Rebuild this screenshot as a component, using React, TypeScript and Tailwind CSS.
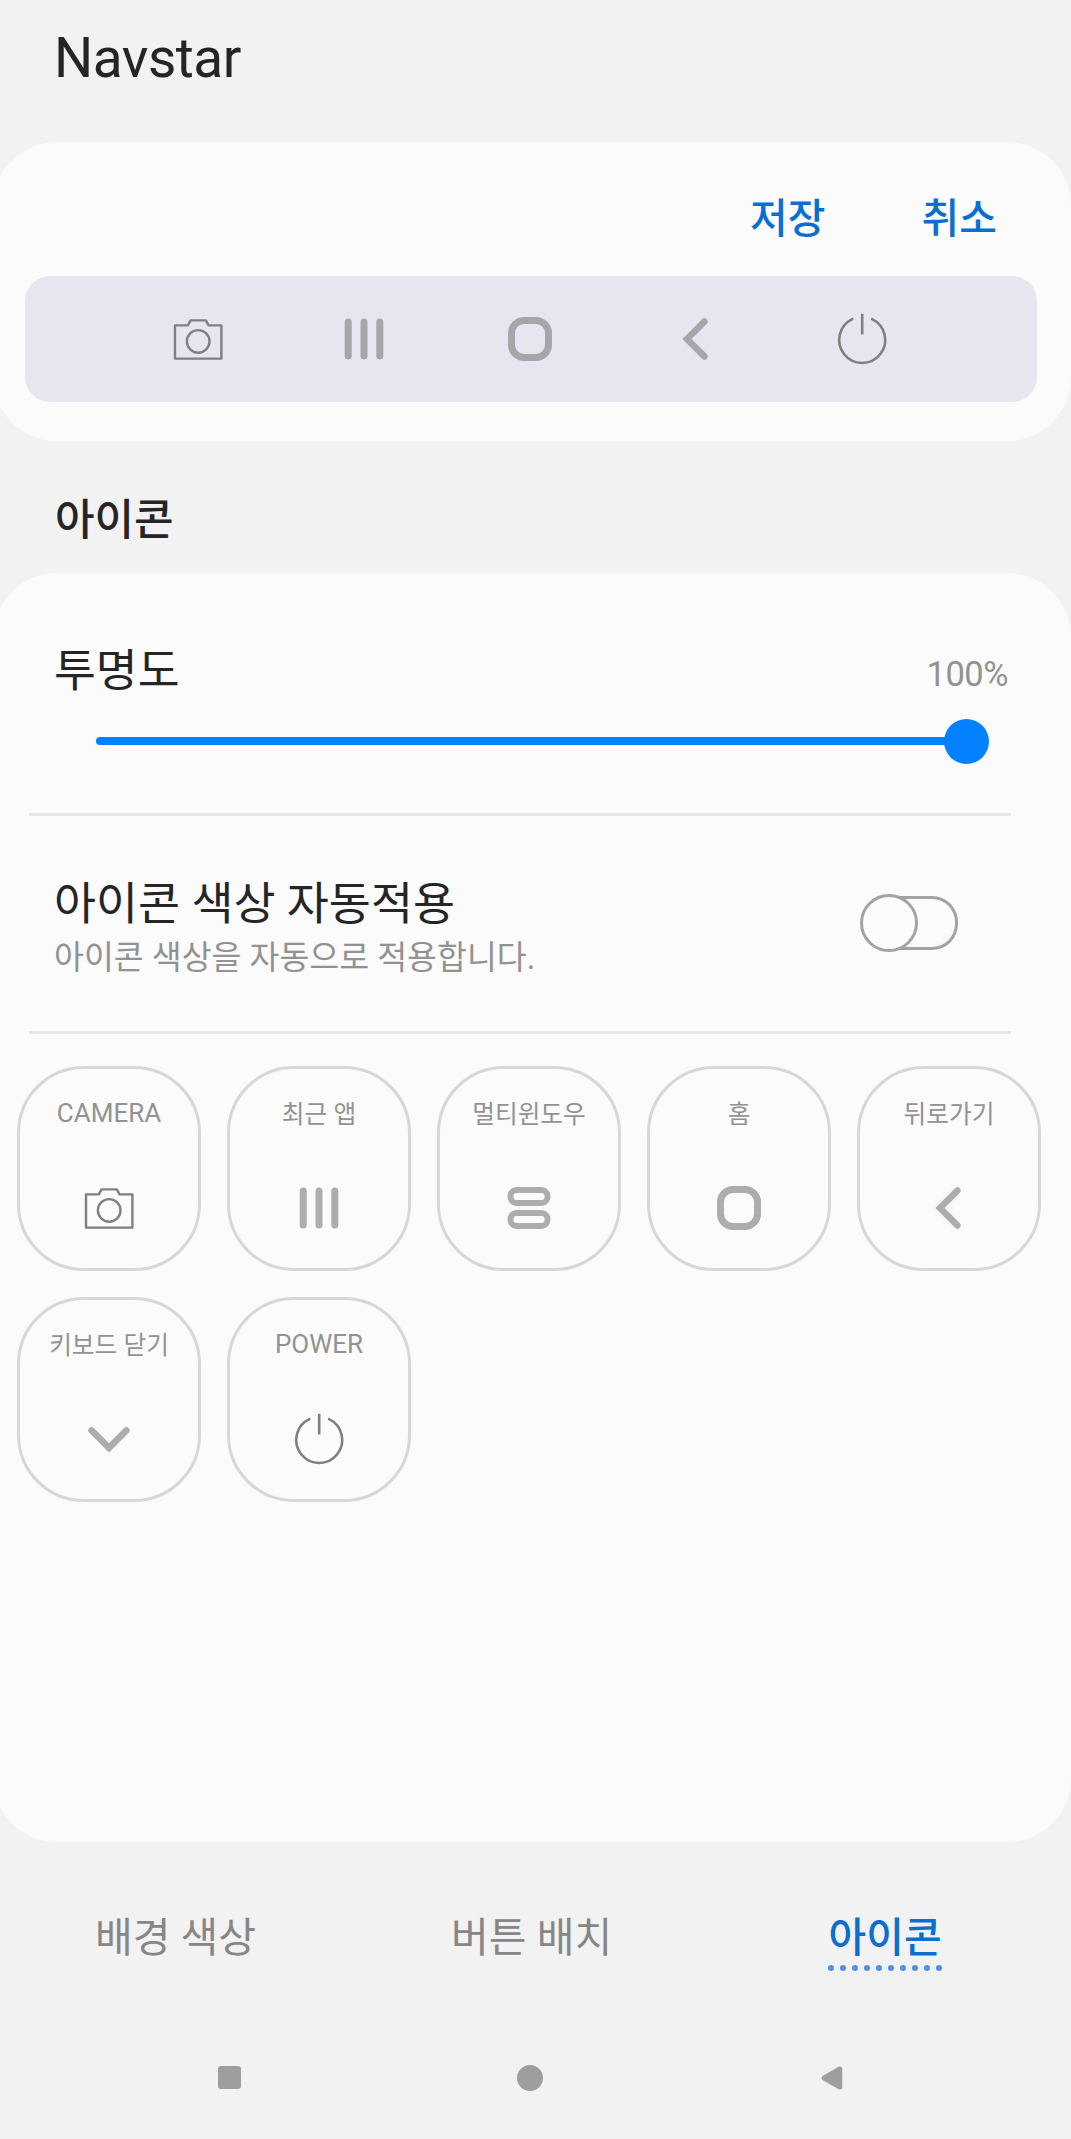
import React, { useState } from "react";

type IconProps = { className?: string };

const CameraIcon = ({ className }: IconProps) => (
  <svg viewBox="0 0 60 60" className={className} fill="none" stroke="#808080" strokeWidth="2.4" strokeLinejoin="round">
    <path d="M7 16.4H19.8L22.6 11.4H37.8L40.6 16.4H53.4V49.6H7Z" />
    <circle cx="30.2" cy="32.4" r="11.3" />
  </svg>
);

const RecentsIcon = ({ className }: IconProps) => (
  <svg viewBox="0 0 60 60" className={className} stroke="currentColor" strokeWidth="7" strokeLinecap="round">
    <path d="M14.2 12.9V47.1M30 12.9V47.1M45.8 12.9V47.1" />
  </svg>
);

const MultiWindowIcon = ({ className }: IconProps) => (
  <svg viewBox="0 0 60 60" className={className} fill="none" stroke="currentColor" strokeWidth="6">
    <rect x="11.5" y="12" width="37" height="13" rx="6" />
    <rect x="11.5" y="35" width="37" height="13" rx="6" />
  </svg>
);

const HomeIcon = ({ className }: IconProps) => (
  <svg viewBox="0 0 60 60" className={className} fill="none" stroke="currentColor" strokeWidth="7">
    <rect x="11.5" y="11.5" width="37" height="37" rx="12.5" />
  </svg>
);

const BackIcon = ({ className }: IconProps) => (
  <svg viewBox="0 0 60 60" className={className} fill="none" stroke="currentColor" strokeWidth="6.6" strokeLinecap="round">
    <path d="M38.4 12.6L21 30L38.4 47.4" />
  </svg>
);

const DownIcon = ({ className }: IconProps) => (
  <svg viewBox="0 0 60 60" className={className} fill="none" stroke="currentColor" strokeWidth="6.6" strokeLinecap="round">
    <path d="M12.6 21.4L30 38.8L47.4 21.4" />
  </svg>
);

const PowerIcon = ({ className }: IconProps) => (
  <svg viewBox="0 0 60 60" className={className} fill="none" stroke="#7f7f7f" strokeWidth="2.6">
    <path d="M20.3 10.2A23 23 0 1 0 40.1 10.2" strokeLinecap="round" />
    <path d="M30.2 4.8V25.4" />
  </svg>
);

const navIcons = [CameraIcon, RecentsIcon, HomeIcon, BackIcon, PowerIcon];

const buttons = [
  { label: "CAMERA", Icon: CameraIcon },
  { label: "최근 앱", Icon: RecentsIcon },
  { label: "멀티윈도우", Icon: MultiWindowIcon },
  { label: "홈", Icon: HomeIcon },
  { label: "뒤로가기", Icon: BackIcon },
  { label: "키보드 닫기", Icon: DownIcon },
  { label: "POWER", Icon: PowerIcon },
];

const tabs = ["배경 색상", "버튼 배치", "아이콘"];

const App = () => {
  const [activeTab, setActiveTab] = useState("아이콘");
  const [autoColor, setAutoColor] = useState(false);

  return (
    <div className="flex h-[2139px] w-[1071px] flex-col overflow-hidden bg-[#f2f2f2] font-[Roboto,'Noto_Sans_CJK_KR',sans-serif] text-[#252525]">
      <h1 className="h-[142px] pl-[54px] pt-[26px] text-[55px] leading-[64px] tracking-[-0.5px]">Navstar</h1>

      {/* Preview */}
      <section className="-ml-[7px] flex h-[299px] flex-col rounded-[64px] bg-[#fbfbfb] pl-8 pr-[34px]">
        <div className="flex h-[134px] justify-end gap-[96px] pr-[40px] pt-[49px] text-[41px] font-medium leading-[56px] text-[#0b6fd0]">
          <button className="h-[56px]">저장</button>
          <button className="h-[56px]">취소</button>
        </div>
        <div className="flex h-[126px] items-center justify-center rounded-[25px] bg-[#e6e6f0] pr-0.5 text-[#a6a6a9]">
          {navIcons.map((Icon, index) => (
            <div key={index} className="flex w-[166px] justify-center">
              <Icon className="size-[60px]" />
            </div>
          ))}
        </div>
      </section>

      <h2 className="h-[132px] pl-[55px] pt-[49px] text-[43px] font-medium leading-[60px]">아이콘</h2>

      <section className="-ml-[7px] flex h-[1269px] flex-col rounded-[64px] bg-[#fbfbfb] pl-[7px]">
        {/* Opacity */}
        <div className="flex h-[145px] items-start justify-between pl-[54px] pr-[63px] pt-[67px]">
          <span className="text-[45.5px] leading-[64px]">투명도</span>
          <span className="pt-[14px] text-[34.5px] leading-[40px] tracking-[-0.5px] text-[#929292]">100%</span>
        </div>
        <div className="flex h-[46px] items-center pl-24 pr-[82px]">
          <div className="h-2 flex-1 rounded-l-full bg-[#0381fe]" />
          <div className="-ml-1 size-[45px] rounded-full bg-[#0381fe]" />
        </div>
        <div className="ml-[29px] mr-[60px] mt-[49px] h-[3px] bg-[#e6e6e6]" />

        {/* Auto colour */}
        <div className="flex h-[215px] items-center justify-between pl-[54px] pr-[113px]">
          <div className="pt-[8px]">
            <p className="text-[45.7px] leading-[60px]">아이콘 색상 자동적용</p>
            <p className="text-[32.5px] leading-[46px] text-[#929292]">아이콘 색상을 자동으로 적용합니다.</p>
          </div>
          <button onClick={() => setAutoColor(!autoColor)} className="flex items-center pb-0.5">
            <span className="z-10 size-[58px] rounded-full border-3 border-[#a3a3a3] bg-[#fcfcfc]" />
            <span className="-ml-[29px] h-[54px] w-[69px] rounded-r-[26px] border-3 border-l-0 border-[#a3a3a3]" />
          </button>
        </div>
        <div className="ml-[29px] mr-[60px] h-[3px] bg-[#e6e6e6]" />

        <div className="grid grid-cols-[repeat(5,184px)] gap-[26px] pl-[17px] pt-8">
          {buttons.map(({ label, Icon }) => (
            <button
              key={label}
              className="flex h-[205px] flex-col items-center rounded-[67px] border-3 border-[#d7d7d7] pt-[27px] text-[#adadad]"
            >
              <span
                className={`h-[82px] whitespace-nowrap text-[#929292] ${
                  /^[A-Z]+$/.test(label) ? "text-[26px] leading-[35px]" : "text-[24.7px] leading-[37px]"
                }`}
              >
                {label}
              </span>
              <Icon className="size-[60px]" />
            </button>
          ))}
        </div>
      </section>

      {/* Tabs */}
      <nav className="flex h-[178px] pl-[95px] pt-[68px] text-[41px] leading-[56px] text-[#868686]">
        {tabs.map((tab) => (
          <button
            key={tab}
            onClick={() => setActiveTab(tab)}
            className="mr-[195px] flex shrink-0 flex-col items-center last:ml-[21px] last:mr-0"
          >
            <span className={activeTab === tab ? "h-[55px] font-medium text-[#0b6fd0]" : "h-[55px]"}>{tab}</span>
            {activeTab === tab && (
              <span className="flex gap-1.5">
                {Array.from({ length: 10 }, (_, i) => (
                  <i key={i} className="size-1.5 rounded-full bg-[#4f90e3]" />
                ))}
              </span>
            )}
          </button>
        ))}
      </nav>

      {/* System navigation bar */}
      <div className="flex h-[115px] items-center justify-between pl-[218px] pr-[228px]">
        <div className="size-[23px] rounded-[3px] bg-[#9e9e9e]" />
        <div className="mr-0.5 size-[26px] rounded-full bg-[#9e9e9e]" />
        <svg viewBox="0 0 22 24" className="h-6 w-[22px]" fill="#9e9e9e" stroke="#9e9e9e" strokeWidth="5" strokeLinejoin="round">
          <path d="M3.2 12L18.8 3V21Z" />
        </svg>
      </div>
    </div>
  );
};

export default App;
